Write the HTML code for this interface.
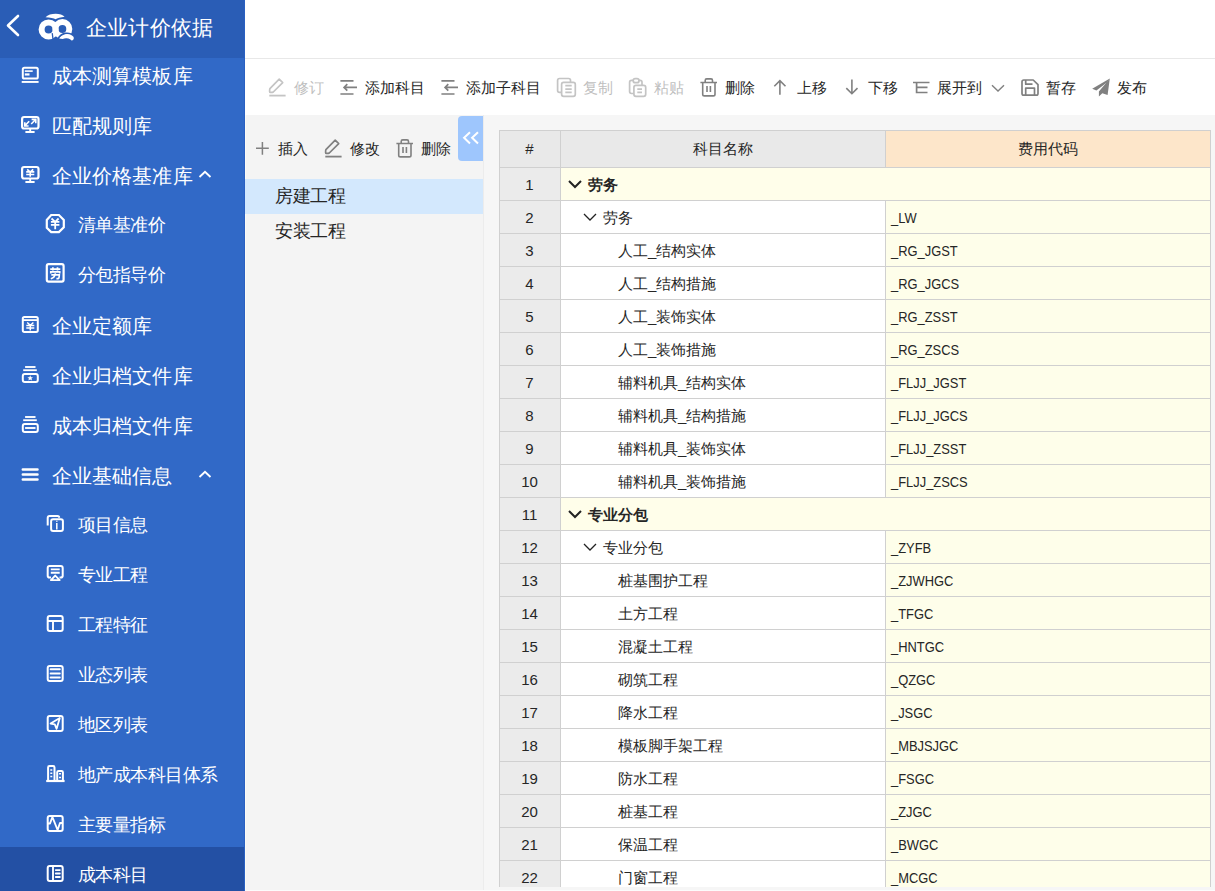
<!DOCTYPE html><html><head><meta charset="utf-8"><style>
*{box-sizing:border-box;margin:0;padding:0}
html,body{width:1215px;height:891px;overflow:hidden;background:#fff;font-family:"Liberation Sans",sans-serif;}
.a{position:absolute;white-space:nowrap;line-height:1}
svg{position:absolute;overflow:visible}
.mi{color:#fff;font-size:20px;letter-spacing:0.1px}
.si{color:#fff;font-size:18px;letter-spacing:-0.55px}
.tt{font-size:15px;color:#262626}
.dis{color:#bfbfbf}
.lt{font-size:18px;color:#262626;letter-spacing:-0.5px}
.cell{position:absolute;font-size:15px;color:#262626;white-space:nowrap;line-height:1}
</style></head><body><div class="a" style="left:0px;top:0px;width:245px;height:891px;background:#3169c7;"></div>
<div class="a" style="left:0px;top:0px;width:245px;height:58px;background:#2a5db6;"></div>
<div class="a" style="left:0px;top:847px;width:245px;height:44px;background:#2350a4;"></div>
<div class="a" style="left:244px;top:0px;width:1px;height:891px;background:#2a60c2;"></div>
<svg style="left:5px;top:14px" width="16" height="24" viewBox="0 0 16 24"><path d="M13 2 L3 11.5 L13 21" fill="none" stroke="#fff" stroke-width="2.6" stroke-linecap="round" stroke-linejoin="round"/></svg>
<svg style="left:36px;top:10px" width="42" height="34" viewBox="0 0 42 34">
<circle cx="12.6" cy="19.4" r="7" fill="none" stroke="#fff" stroke-width="6"/>
<circle cx="26.4" cy="19" r="6.9" fill="none" stroke="#fff" stroke-width="6"/>
<path d="M16.2 23.2 L17 29" stroke="#2a5db6" stroke-width="1.3"/>
<path d="M22 28.8 C25 23 33 21 37.6 26.3" fill="none" stroke="#2a5db6" stroke-width="1.6"/>
<path d="M23.3 28.6 C26.5 24 33.5 22.5 37.2 26.5 C38.5 28.2 37.5 30.8 35.6 30.4 C32.5 27.6 28.5 27.6 23.3 28.6Z" fill="#fff"/>
<path d="M9.5 7.2 C13.5 3 25 2.6 28.6 6.8 C25 7.3 21 8 19.5 9.3 C18 8 14 7.4 9.5 7.2Z" fill="#fff"/>
</svg>
<div class="a " style="left:86px;top:17px;color:#fff;font-size:21px;letter-spacing:0.2px">企业计价依据</div>
<svg style="left:16px;top:62px" width="28" height="28" viewBox="0 0 28 28"><rect x="6.8" y="5.7" width="15" height="10.9" rx="1.6" stroke="#fff" stroke-width="2" fill="none"/><path d="M8.8 9.1 H16.7" stroke="#fff" fill="none" stroke-width="1.6"/><path d="M8.8 12.45 H13.5" stroke="#fff" fill="none" stroke-width="2.2"/><path d="M5.7 19.95 H22.6" stroke="#fff" fill="none" stroke-width="1.9"/></svg>
<div class="a mi" style="left:52px;top:66px;">成本测算模板库</div>
<svg style="left:16px;top:111px" width="28" height="28" viewBox="0 0 28 28"><rect x="6.1" y="6" width="16.4" height="11.5" rx="2" stroke="#fff" fill="none" stroke-width="2.2"/><path d="M14.2 17.8 V21 M9.4 21 H18.6" stroke="#fff" fill="none" stroke-width="1.9"/><path d="M13.2 10.2 L9.2 14.4 M8.8 11.2 V15 H12.6 M15.2 13 L19.4 8.8 M15.6 8.4 H19.8 V12.2" stroke="#fff" fill="none" stroke-width="1.6"/></svg>
<div class="a mi" style="left:52px;top:116px;">匹配规则库</div>
<svg style="left:16px;top:161px" width="28" height="28" viewBox="0 0 28 28"><rect x="6.1" y="6" width="16.4" height="11.5" rx="2" stroke="#fff" fill="none" stroke-width="2.2"/><path d="M14.2 17.8 V21 M9.4 21 H18.6" stroke="#fff" fill="none" stroke-width="1.9"/><path d="M11.2 8.3 L14.2 11.2 L17.2 8.3 M14.2 11 V15.8 M10.2 10.9 H18.3 M10.2 13.5 H18.3" stroke="#fff" fill="none" stroke-width="1.6"/></svg>
<div class="a mi" style="left:52px;top:166px;">企业价格基准库</div>
<svg style="left:40px;top:210px" width="30" height="30" viewBox="0 0 30 30"><path d="M11.2 5 H18.9 L23.8 9.9 V17.2 L18.9 22.1 H11.2 L6.8 17.7 V9.9Z" stroke="#fff" fill="none" stroke-width="2.2"/><path d="M11.5 8.5 L15.2 11.8 L18.6 8.5 M15.2 11.6 V19.3 M10.9 11.8 H19.4 M10.9 14.8 H19.4" stroke="#fff" fill="none" stroke-width="1.8"/></svg>
<div class="a si" style="left:78px;top:216px;">清单基准价</div>
<svg style="left:40px;top:259px" width="30" height="30" viewBox="0 0 30 30"><rect x="6.8" y="5.1" width="16.8" height="17.5" rx="1.8" stroke="#fff" fill="none" stroke-width="2.2"/><path d="M10.2 10.2 H20.3 M12.9 8.2 V11.6 M17.5 8.2 V11.6 M10.8 14.6 V12.9 H19.7 V14.6 M11.3 15.9 H19.3 Q19.2 19.6 18 19.6 H16.4 M15.3 14.2 Q15.2 18.2 10.8 19.8" stroke="#fff" stroke-width="1.7" fill="none"/></svg>
<div class="a si" style="left:78px;top:266px;">分包指导价</div>
<svg style="left:16px;top:311px" width="28" height="28" viewBox="0 0 28 28"><rect x="6.8" y="5.9" width="15" height="15" rx="1.6" stroke="#fff" stroke-width="2" fill="none"/><path d="M6.8 9.1 H21.8" stroke="#fff" fill="none" stroke-width="1.8"/><path d="M11.2 11.5 L14.3 14.3 L17.4 11.5 M14.3 14 V19.5 M10.3 14.6 H18.3 M10.3 17 H18.3" stroke="#fff" fill="none" stroke-width="1.5"/></svg>
<div class="a mi" style="left:52px;top:316px;">企业定额库</div>
<svg style="left:16px;top:361px" width="28" height="28" viewBox="0 0 28 28"><path d="M9.1 6 H19.5" stroke="#fff" fill="none" stroke-width="1.9"/><path d="M7.2 9.2 H20.8" stroke="#fff" fill="none" stroke-width="1.8"/><rect x="6.8" y="13" width="15" height="7.9" rx="2" stroke="#fff" stroke-width="2" fill="none"/><path d="M14.2 14.3 L15 16.2 L17 16.3 L15.5 17.6 L16 19.5 L14.2 18.4 L12.4 19.5 L12.9 17.6 L11.4 16.3 L13.4 16.2Z" fill="#fff"/></svg>
<div class="a mi" style="left:52px;top:366px;">企业归档文件库</div>
<svg style="left:16px;top:411px" width="28" height="28" viewBox="0 0 28 28"><path d="M9.1 6 H19.5" stroke="#fff" fill="none" stroke-width="1.9"/><path d="M7.2 9.2 H20.8" stroke="#fff" fill="none" stroke-width="1.8"/><rect x="6.8" y="13" width="15" height="7.9" rx="2" stroke="#fff" stroke-width="2" fill="none"/><path d="M9.1 17 H19.5" stroke="#fff" fill="none" stroke-width="1.9"/></svg>
<div class="a mi" style="left:52px;top:416px;">成本归档文件库</div>
<svg style="left:16px;top:461px" width="28" height="28" viewBox="0 0 28 28"><path d="M6.8 8.5 H21.5 M6.8 13.5 H21.5 M6.8 18.6 H21.5" stroke="#fff" fill="none" stroke-width="2.5" stroke-linecap="round"/></svg>
<div class="a mi" style="left:52px;top:466px;">企业基础信息</div>
<svg style="left:40px;top:509px" width="30" height="30" viewBox="0 0 30 30"><path d="M7.7 16.5 V9 Q7.7 7.1 9.6 7.1 H17.5 Q19.2 7.1 19.2 8.8" stroke="#fff" fill="none" stroke-width="2"/><rect x="11.1" y="10.3" width="11.8" height="11.6" rx="2" stroke="#fff" stroke-width="2" fill="none"/><path d="M16.8 11.8 V12.8 M16.8 14 V20.5" stroke="#fff" fill="none" stroke-width="1.5"/></svg>
<div class="a si" style="left:78px;top:516px;">项目信息</div>
<svg style="left:40px;top:559px" width="30" height="30" viewBox="0 0 30 30"><path d="M11 18.5 H9.5 Q7.7 18.5 7.7 16.7 V9 Q7.7 7.1 9.6 7.1 H20.8 Q22.7 7.1 22.7 9 V16.7 Q22.7 18.5 20.8 18.5 H19.5" stroke="#fff" stroke-width="2" fill="none"/><path d="M10.8 10.4 H19.7 M10.8 13.8 H19.7" stroke="#fff" fill="none" stroke-width="1.9"/><path d="M15.2 16.6 L10.9 21.1 H19.7Z" stroke="#fff" fill="none" stroke-width="1.9" stroke-linejoin="round"/></svg>
<div class="a si" style="left:78px;top:566px;">专业工程</div>
<svg style="left:40px;top:609px" width="30" height="30" viewBox="0 0 30 30"><rect x="7.7" y="7.1" width="15" height="14.8" rx="2" stroke="#fff" stroke-width="2" fill="none"/><path d="M7.7 12 H22.7 M13 12 V21.9" stroke="#fff" fill="none" stroke-width="1.9"/></svg>
<div class="a si" style="left:78px;top:616px;">工程特征</div>
<svg style="left:40px;top:659px" width="30" height="30" viewBox="0 0 30 30"><rect x="7.7" y="7.1" width="15" height="14.8" rx="2" stroke="#fff" stroke-width="2" fill="none"/><path d="M10.6 10.3 H19.8 M10.6 14.5 H19.8 M10.6 18.5 H19.8" stroke="#fff" fill="none" stroke-width="1.9" stroke-linecap="round"/></svg>
<div class="a si" style="left:78px;top:666px;">业态列表</div>
<svg style="left:40px;top:709px" width="30" height="30" viewBox="0 0 30 30"><rect x="7.7" y="7.1" width="15" height="14.8" rx="2" stroke="#fff" stroke-width="2" fill="none"/><path d="M19.8 9 L10.6 14.6 L14.8 15.4 L16.6 19.8Z" stroke="#fff" fill="none" stroke-width="1.8" stroke-linejoin="round"/></svg>
<div class="a si" style="left:78px;top:716px;">地区列表</div>
<svg style="left:40px;top:759px" width="30" height="30" viewBox="0 0 30 30"><path d="M8.1 21.5 V8.5 Q8.1 7.1 9.5 7.1 H13.1 Q14.5 7.1 14.5 8.5 V21.5 M17.2 21.5 V13.3 Q17.2 11.9 18.6 11.9 H21.5 Q22.9 11.9 22.9 13.3 V21.5" stroke="#fff" stroke-width="2" fill="none"/><path d="M6.2 22 H24.6" stroke="#fff" fill="none" stroke-width="2.2"/><path d="M10.3 10.9 H12.3 M10.3 14.3 H12.3 M10.3 17.6 H12.3 M19 14.7 H21 M19 18.5 H21" stroke="#fff" fill="none" stroke-width="1.5"/></svg>
<div class="a si" style="left:78px;top:766px;">地产成本科目体系</div>
<svg style="left:40px;top:809px" width="30" height="30" viewBox="0 0 30 30"><rect x="7.7" y="7.1" width="15" height="14.8" rx="2" stroke="#fff" stroke-width="2" fill="none"/><path d="M7.7 14.5 H10 L12.4 8 L17.6 21 L20 14 H22.7" stroke="#fff" fill="none" stroke-width="1.9" stroke-linejoin="round"/></svg>
<div class="a si" style="left:78px;top:816px;">主要量指标</div>
<svg style="left:40px;top:859px" width="30" height="30" viewBox="0 0 30 30"><rect x="7.7" y="7.1" width="15" height="14.8" rx="2" stroke="#fff" stroke-width="2" fill="none"/><path d="M13 7.1 V21.9" stroke="#fff" fill="none" stroke-width="1.9"/><path d="M15.8 11.1 H19.8 M15.8 14.5 H19.8 M15.8 18 H19.8" stroke="#fff" fill="none" stroke-width="1.9" stroke-linecap="round"/></svg>
<div class="a si" style="left:78px;top:866px;">成本科目</div>
<svg style="left:197px;top:169px" width="16" height="10" viewBox="0 0 16 10"><path d="M2.5 8 L8 2.8 L13.5 8" fill="none" stroke="#fff" stroke-width="1.9"/></svg>
<svg style="left:197px;top:469px" width="16" height="10" viewBox="0 0 16 10"><path d="M2.5 8 L8 2.8 L13.5 8" fill="none" stroke="#fff" stroke-width="1.9"/></svg>
<div class="a" style="left:245px;top:58px;width:970px;height:1px;background:#e8e8e8;"></div>
<svg style="left:264px;top:74px" width="26" height="26" viewBox="0 0 26 26"><path d="M5.9 14.6 L15.2 5.2 L18.7 8.6 L9.3 18 Q8.7 18.4 6.5 18.4 Q5.6 18.4 5.6 17.4 Q5.6 15.2 5.9 14.6Z" stroke="#c4c4c4" stroke-width="1.7" fill="none" stroke-linejoin="round"/><path d="M5.3 21.6 H21.6" stroke="#c4c4c4" stroke-width="1.8"/></svg>
<div class="a tt dis" style="left:294px;top:80px;">修订</div>
<svg style="left:336px;top:74px" width="26" height="26" viewBox="0 0 26 26"><path d="M4.4 6.8 H17.5 M4.4 20 H17.5 M8.2 13.4 H21 M11.3 10.2 L8.1 13.4 L11.3 16.6" stroke="#808080" stroke-width="1.7" fill="none"/></svg>
<div class="a tt" style="left:365px;top:80px;">添加科目</div>
<svg style="left:437px;top:74px" width="26" height="26" viewBox="0 0 26 26"><path d="M4.4 6.8 H17.5 M4.4 20 H17.5 M8.2 13.4 H21 M11.3 10.2 L8.1 13.4 L11.3 16.6" stroke="#808080" stroke-width="1.7" fill="none"/></svg>
<div class="a tt" style="left:466px;top:80px;">添加子科目</div>
<svg style="left:553px;top:74px" width="26" height="26" viewBox="0 0 26 26"><path d="M8.6 18.4 H6.5 Q4.6 18.4 4.6 16.5 V6.4 Q4.6 4.5 6.5 4.5 H15.6 Q17.5 4.5 17.5 6.4 V8.4" stroke="#c4c4c4" stroke-width="1.7" fill="none"/><rect x="8.6" y="8.4" width="13.7" height="13.9" rx="2" stroke="#c4c4c4" stroke-width="1.7" fill="none"/><path d="M12.3 11.7 H18.7 M12.3 15.1 H18.7 M12.3 18.4 H18.7" stroke="#c4c4c4" stroke-width="1.7" fill="none"/></svg>
<div class="a tt dis" style="left:583px;top:80px;">复制</div>
<svg style="left:624px;top:74px" width="26" height="26" viewBox="0 0 26 26"><path d="M9.3 6.4 H7.5 Q5.6 6.4 5.6 8.3 V17.6 Q5.6 19.5 7.5 19.5 H9.8 M18 11.4 V8.3 Q18 6.4 16.1 6.4 H14.8" stroke="#c4c4c4" stroke-width="1.7" fill="none"/><rect x="9.2" y="4.6" width="5.8" height="4.1" rx="2" stroke="#c4c4c4" stroke-width="1.7" fill="none"/><rect x="9.9" y="11.4" width="11.8" height="10.9" rx="2" stroke="#c4c4c4" stroke-width="1.7" fill="none"/><path d="M13.3 15.2 H18 M13.3 18.4 H18" stroke="#c4c4c4" stroke-width="1.7" fill="none"/></svg>
<div class="a tt dis" style="left:654px;top:80px;">粘贴</div>
<svg style="left:696px;top:74px" width="26" height="26" viewBox="0 0 26 26"><path d="M9.2 8.4 V6.4 Q9.2 4.9 10.7 4.9 H15 Q16.5 4.9 16.5 6.4 V8.4 M4.4 8.5 H21 M6.7 8.5 V20.2 Q6.7 21.9 8.4 21.9 H17.3 Q19 21.9 19 20.2 V8.5 M11 12 V18 M14.4 12 V18" stroke="#808080" stroke-width="1.6" fill="none"/></svg>
<div class="a tt" style="left:725px;top:80px;">删除</div>
<svg style="left:768px;top:74px" width="26" height="26" viewBox="0 0 26 26"><path d="M11.9 6.6 V20.8 M6.3 12.2 L11.9 6.6 L17.5 12.2" stroke="#808080" stroke-width="1.6" fill="none"/></svg>
<div class="a tt" style="left:797px;top:80px;">上移</div>
<svg style="left:840px;top:74px" width="26" height="26" viewBox="0 0 26 26"><path d="M11.9 5.5 V19.7 M6.3 14.1 L11.9 19.7 L17.5 14.1" stroke="#808080" stroke-width="1.6" fill="none"/></svg>
<div class="a tt" style="left:868px;top:80px;">下移</div>
<svg style="left:908px;top:74px" width="26" height="26" viewBox="0 0 26 26"><path d="M5 8.5 H21.5 M8.6 8.5 V18.5 H19.5 M8.6 13.4 H19.5" stroke="#808080" stroke-width="1.7" fill="none"/></svg>
<div class="a tt" style="left:937px;top:80px;">展开到</div>
<svg style="left:1017px;top:74px" width="26" height="26" viewBox="0 0 26 26"><path d="M6.8 6 H16.2 L21 10.6 V19.5 Q21 21.2 19.3 21.2 H6.8 Q5 21.2 5 19.5 V7.8 Q5 6 6.8 6Z M8.7 6 V10.2 H15.5 M8.7 21.2 V14.1 H17.5 V21.2" stroke="#808080" stroke-width="1.7" fill="none" stroke-linejoin="round"/></svg>
<div class="a tt" style="left:1046px;top:80px;">暂存</div>
<svg style="left:1088px;top:74px" width="26" height="26" viewBox="0 0 26 26"><path d="M21.8 4.5 L4.2 14.8 L8.4 16.6 L19.2 8.2Z" fill="#808080"/><path d="M21.8 4.5 L10.9 17.6 L10.9 22.6 L14.3 19.2 L19.6 20.9Z" fill="#808080"/></svg>
<div class="a tt" style="left:1117px;top:80px;">发布</div>
<svg style="left:990px;top:83px" width="16" height="10" viewBox="0 0 16 10"><path d="M2 2.2 L8 8 L14 2.2" fill="none" stroke="#808080" stroke-width="1.4"/></svg>
<div class="a" style="left:245px;top:115px;width:970px;height:776px;background:#f6f6f6;"></div>
<div class="a" style="left:245px;top:115px;width:238px;height:776px;background:#f4f4f4;"></div>
<div class="a" style="left:245px;top:115px;width:1px;height:776px;background:#fbfbf6;"></div>
<div class="a" style="left:483px;top:115px;width:1px;height:776px;background:#ececec;"></div>
<div class="a" style="left:245px;top:179px;width:238px;height:35px;background:#d3e8fd;"></div>
<div class="a" style="left:458px;top:116px;width:25px;height:45px;background:#9ec6fd;border-radius:4px 0 0 4px"></div>
<svg style="left:456px;top:114px" width="30" height="50" viewBox="0 0 30 50"><path d="M14 18.2 L8.1 23.8 L14 29.4 M22 18.2 L16.1 23.8 L22 29.4" fill="none" stroke="#fff" stroke-width="2"/></svg>
<svg style="left:250px;top:134px" width="26" height="26" viewBox="0 0 26 26"><path d="M12.4 7.9 V20.8 M6 14.3 H18.8" stroke="#808080" stroke-width="1.5" fill="none"/></svg>
<div class="a tt" style="left:278px;top:141px;">插入</div>
<svg style="left:320px;top:135px" width="26" height="26" viewBox="0 0 26 26"><path d="M5.9 14.6 L15.2 5.2 L18.7 8.6 L9.3 18 Q8.7 18.4 6.5 18.4 Q5.6 18.4 5.6 17.4 Q5.6 15.2 5.9 14.6Z" stroke="#808080" stroke-width="1.7" fill="none" stroke-linejoin="round"/><path d="M5.3 21.6 H21.6" stroke="#808080" stroke-width="1.8"/></svg>
<div class="a tt" style="left:350px;top:141px;">修改</div>
<svg style="left:392px;top:135px" width="26" height="26" viewBox="0 0 26 26"><path d="M9.2 8.4 V6.4 Q9.2 4.9 10.7 4.9 H15 Q16.5 4.9 16.5 6.4 V8.4 M4.4 8.5 H21 M6.7 8.5 V20.2 Q6.7 21.9 8.4 21.9 H17.3 Q19 21.9 19 20.2 V8.5 M11 12 V18 M14.4 12 V18" stroke="#808080" stroke-width="1.6" fill="none"/></svg>
<div class="a tt" style="left:421px;top:141px;">删除</div>
<div class="a lt" style="left:275px;top:187px;">房建工程</div>
<div class="a lt" style="left:275px;top:222px;">安装工程</div>
<div class="a" style="left:499px;top:130px;width:712px;height:757px;overflow:hidden;background:#fff">
<div class="a" style="left:0px;top:0px;width:61px;height:37px;background:#e9e9e9;"></div>
<div class="a" style="left:61px;top:0px;width:325px;height:37px;background:#e9e9e9;"></div>
<div class="a" style="left:386px;top:0px;width:326px;height:37px;background:#fde6ca;"></div>
<div class="cell" style="left:0px;top:11px;width:61px;text-align:center">#</div>
<div class="cell" style="left:61px;top:11px;width:325px;text-align:center">科目名称</div>
<div class="cell" style="left:386px;top:11px;width:325px;text-align:center">费用代码</div>
<div class="a" style="left:0px;top:37px;width:61px;height:33px;background:#ebebeb;"></div>
<div class="a" style="left:61px;top:37px;width:650px;height:33px;background:#fffeea;"></div>
<div class="cell" style="left:0px;top:47px;width:61px;text-align:center">1</div>
<svg style="left:69px;top:50px" width="14" height="8"><path d="M1 1 L7 7 L13 1" fill="none" stroke="#222" stroke-width="2"/></svg>
<div class="cell" style="left:89px;top:47px;font-weight:bold">劳务</div>
<div class="a" style="left:0px;top:70px;width:61px;height:33px;background:#ebebeb;"></div>
<div class="a" style="left:61px;top:70px;width:325px;height:33px;background:#fff;"></div>
<div class="a" style="left:386px;top:70px;width:325px;height:33px;background:#fefeea;"></div>
<div class="cell" style="left:0px;top:80px;width:61px;text-align:center">2</div>
<svg style="left:84px;top:83px" width="14" height="8"><path d="M1 1 L7 7 L13 1" fill="none" stroke="#222" stroke-width="1.3"/></svg>
<div class="cell" style="left:104px;top:80px;">劳务</div>
<div class="cell" style="left:392px;top:80px;transform:scaleX(0.86);transform-origin:0 0">_LW</div>
<div class="a" style="left:0px;top:103px;width:61px;height:33px;background:#ebebeb;"></div>
<div class="a" style="left:61px;top:103px;width:325px;height:33px;background:#fff;"></div>
<div class="a" style="left:386px;top:103px;width:325px;height:33px;background:#fefeea;"></div>
<div class="cell" style="left:0px;top:113px;width:61px;text-align:center">3</div>
<div class="cell" style="left:119px;top:113px;">人工_结构实体</div>
<div class="cell" style="left:392px;top:113px;transform:scaleX(0.86);transform-origin:0 0">_RG_JGST</div>
<div class="a" style="left:0px;top:136px;width:61px;height:33px;background:#ebebeb;"></div>
<div class="a" style="left:61px;top:136px;width:325px;height:33px;background:#fff;"></div>
<div class="a" style="left:386px;top:136px;width:325px;height:33px;background:#fefeea;"></div>
<div class="cell" style="left:0px;top:146px;width:61px;text-align:center">4</div>
<div class="cell" style="left:119px;top:146px;">人工_结构措施</div>
<div class="cell" style="left:392px;top:146px;transform:scaleX(0.86);transform-origin:0 0">_RG_JGCS</div>
<div class="a" style="left:0px;top:169px;width:61px;height:33px;background:#ebebeb;"></div>
<div class="a" style="left:61px;top:169px;width:325px;height:33px;background:#fff;"></div>
<div class="a" style="left:386px;top:169px;width:325px;height:33px;background:#fefeea;"></div>
<div class="cell" style="left:0px;top:179px;width:61px;text-align:center">5</div>
<div class="cell" style="left:119px;top:179px;">人工_装饰实体</div>
<div class="cell" style="left:392px;top:179px;transform:scaleX(0.86);transform-origin:0 0">_RG_ZSST</div>
<div class="a" style="left:0px;top:202px;width:61px;height:33px;background:#ebebeb;"></div>
<div class="a" style="left:61px;top:202px;width:325px;height:33px;background:#fff;"></div>
<div class="a" style="left:386px;top:202px;width:325px;height:33px;background:#fefeea;"></div>
<div class="cell" style="left:0px;top:212px;width:61px;text-align:center">6</div>
<div class="cell" style="left:119px;top:212px;">人工_装饰措施</div>
<div class="cell" style="left:392px;top:212px;transform:scaleX(0.86);transform-origin:0 0">_RG_ZSCS</div>
<div class="a" style="left:0px;top:235px;width:61px;height:33px;background:#ebebeb;"></div>
<div class="a" style="left:61px;top:235px;width:325px;height:33px;background:#fff;"></div>
<div class="a" style="left:386px;top:235px;width:325px;height:33px;background:#fefeea;"></div>
<div class="cell" style="left:0px;top:245px;width:61px;text-align:center">7</div>
<div class="cell" style="left:119px;top:245px;">辅料机具_结构实体</div>
<div class="cell" style="left:392px;top:245px;transform:scaleX(0.86);transform-origin:0 0">_FLJJ_JGST</div>
<div class="a" style="left:0px;top:268px;width:61px;height:33px;background:#ebebeb;"></div>
<div class="a" style="left:61px;top:268px;width:325px;height:33px;background:#fff;"></div>
<div class="a" style="left:386px;top:268px;width:325px;height:33px;background:#fefeea;"></div>
<div class="cell" style="left:0px;top:278px;width:61px;text-align:center">8</div>
<div class="cell" style="left:119px;top:278px;">辅料机具_结构措施</div>
<div class="cell" style="left:392px;top:278px;transform:scaleX(0.86);transform-origin:0 0">_FLJJ_JGCS</div>
<div class="a" style="left:0px;top:301px;width:61px;height:33px;background:#ebebeb;"></div>
<div class="a" style="left:61px;top:301px;width:325px;height:33px;background:#fff;"></div>
<div class="a" style="left:386px;top:301px;width:325px;height:33px;background:#fefeea;"></div>
<div class="cell" style="left:0px;top:311px;width:61px;text-align:center">9</div>
<div class="cell" style="left:119px;top:311px;">辅料机具_装饰实体</div>
<div class="cell" style="left:392px;top:311px;transform:scaleX(0.86);transform-origin:0 0">_FLJJ_ZSST</div>
<div class="a" style="left:0px;top:334px;width:61px;height:33px;background:#ebebeb;"></div>
<div class="a" style="left:61px;top:334px;width:325px;height:33px;background:#fff;"></div>
<div class="a" style="left:386px;top:334px;width:325px;height:33px;background:#fefeea;"></div>
<div class="cell" style="left:0px;top:344px;width:61px;text-align:center">10</div>
<div class="cell" style="left:119px;top:344px;">辅料机具_装饰措施</div>
<div class="cell" style="left:392px;top:344px;transform:scaleX(0.86);transform-origin:0 0">_FLJJ_ZSCS</div>
<div class="a" style="left:0px;top:367px;width:61px;height:33px;background:#ebebeb;"></div>
<div class="a" style="left:61px;top:367px;width:650px;height:33px;background:#fffeea;"></div>
<div class="cell" style="left:0px;top:377px;width:61px;text-align:center">11</div>
<svg style="left:69px;top:380px" width="14" height="8"><path d="M1 1 L7 7 L13 1" fill="none" stroke="#222" stroke-width="2"/></svg>
<div class="cell" style="left:89px;top:377px;font-weight:bold">专业分包</div>
<div class="a" style="left:0px;top:400px;width:61px;height:33px;background:#ebebeb;"></div>
<div class="a" style="left:61px;top:400px;width:325px;height:33px;background:#fff;"></div>
<div class="a" style="left:386px;top:400px;width:325px;height:33px;background:#fefeea;"></div>
<div class="cell" style="left:0px;top:410px;width:61px;text-align:center">12</div>
<svg style="left:84px;top:413px" width="14" height="8"><path d="M1 1 L7 7 L13 1" fill="none" stroke="#222" stroke-width="1.3"/></svg>
<div class="cell" style="left:104px;top:410px;">专业分包</div>
<div class="cell" style="left:392px;top:410px;transform:scaleX(0.86);transform-origin:0 0">_ZYFB</div>
<div class="a" style="left:0px;top:433px;width:61px;height:33px;background:#ebebeb;"></div>
<div class="a" style="left:61px;top:433px;width:325px;height:33px;background:#fff;"></div>
<div class="a" style="left:386px;top:433px;width:325px;height:33px;background:#fefeea;"></div>
<div class="cell" style="left:0px;top:443px;width:61px;text-align:center">13</div>
<div class="cell" style="left:119px;top:443px;">桩基围护工程</div>
<div class="cell" style="left:392px;top:443px;transform:scaleX(0.86);transform-origin:0 0">_ZJWHGC</div>
<div class="a" style="left:0px;top:466px;width:61px;height:33px;background:#ebebeb;"></div>
<div class="a" style="left:61px;top:466px;width:325px;height:33px;background:#fff;"></div>
<div class="a" style="left:386px;top:466px;width:325px;height:33px;background:#fefeea;"></div>
<div class="cell" style="left:0px;top:476px;width:61px;text-align:center">14</div>
<div class="cell" style="left:119px;top:476px;">土方工程</div>
<div class="cell" style="left:392px;top:476px;transform:scaleX(0.86);transform-origin:0 0">_TFGC</div>
<div class="a" style="left:0px;top:499px;width:61px;height:33px;background:#ebebeb;"></div>
<div class="a" style="left:61px;top:499px;width:325px;height:33px;background:#fff;"></div>
<div class="a" style="left:386px;top:499px;width:325px;height:33px;background:#fefeea;"></div>
<div class="cell" style="left:0px;top:509px;width:61px;text-align:center">15</div>
<div class="cell" style="left:119px;top:509px;">混凝土工程</div>
<div class="cell" style="left:392px;top:509px;transform:scaleX(0.86);transform-origin:0 0">_HNTGC</div>
<div class="a" style="left:0px;top:532px;width:61px;height:33px;background:#ebebeb;"></div>
<div class="a" style="left:61px;top:532px;width:325px;height:33px;background:#fff;"></div>
<div class="a" style="left:386px;top:532px;width:325px;height:33px;background:#fefeea;"></div>
<div class="cell" style="left:0px;top:542px;width:61px;text-align:center">16</div>
<div class="cell" style="left:119px;top:542px;">砌筑工程</div>
<div class="cell" style="left:392px;top:542px;transform:scaleX(0.86);transform-origin:0 0">_QZGC</div>
<div class="a" style="left:0px;top:565px;width:61px;height:33px;background:#ebebeb;"></div>
<div class="a" style="left:61px;top:565px;width:325px;height:33px;background:#fff;"></div>
<div class="a" style="left:386px;top:565px;width:325px;height:33px;background:#fefeea;"></div>
<div class="cell" style="left:0px;top:575px;width:61px;text-align:center">17</div>
<div class="cell" style="left:119px;top:575px;">降水工程</div>
<div class="cell" style="left:392px;top:575px;transform:scaleX(0.86);transform-origin:0 0">_JSGC</div>
<div class="a" style="left:0px;top:598px;width:61px;height:33px;background:#ebebeb;"></div>
<div class="a" style="left:61px;top:598px;width:325px;height:33px;background:#fff;"></div>
<div class="a" style="left:386px;top:598px;width:325px;height:33px;background:#fefeea;"></div>
<div class="cell" style="left:0px;top:608px;width:61px;text-align:center">18</div>
<div class="cell" style="left:119px;top:608px;">模板脚手架工程</div>
<div class="cell" style="left:392px;top:608px;transform:scaleX(0.86);transform-origin:0 0">_MBJSJGC</div>
<div class="a" style="left:0px;top:631px;width:61px;height:33px;background:#ebebeb;"></div>
<div class="a" style="left:61px;top:631px;width:325px;height:33px;background:#fff;"></div>
<div class="a" style="left:386px;top:631px;width:325px;height:33px;background:#fefeea;"></div>
<div class="cell" style="left:0px;top:641px;width:61px;text-align:center">19</div>
<div class="cell" style="left:119px;top:641px;">防水工程</div>
<div class="cell" style="left:392px;top:641px;transform:scaleX(0.86);transform-origin:0 0">_FSGC</div>
<div class="a" style="left:0px;top:664px;width:61px;height:33px;background:#ebebeb;"></div>
<div class="a" style="left:61px;top:664px;width:325px;height:33px;background:#fff;"></div>
<div class="a" style="left:386px;top:664px;width:325px;height:33px;background:#fefeea;"></div>
<div class="cell" style="left:0px;top:674px;width:61px;text-align:center">20</div>
<div class="cell" style="left:119px;top:674px;">桩基工程</div>
<div class="cell" style="left:392px;top:674px;transform:scaleX(0.86);transform-origin:0 0">_ZJGC</div>
<div class="a" style="left:0px;top:697px;width:61px;height:33px;background:#ebebeb;"></div>
<div class="a" style="left:61px;top:697px;width:325px;height:33px;background:#fff;"></div>
<div class="a" style="left:386px;top:697px;width:325px;height:33px;background:#fefeea;"></div>
<div class="cell" style="left:0px;top:707px;width:61px;text-align:center">21</div>
<div class="cell" style="left:119px;top:707px;">保温工程</div>
<div class="cell" style="left:392px;top:707px;transform:scaleX(0.86);transform-origin:0 0">_BWGC</div>
<div class="a" style="left:0px;top:730px;width:61px;height:33px;background:#ebebeb;"></div>
<div class="a" style="left:61px;top:730px;width:325px;height:33px;background:#fff;"></div>
<div class="a" style="left:386px;top:730px;width:325px;height:33px;background:#fefeea;"></div>
<div class="cell" style="left:0px;top:740px;width:61px;text-align:center">22</div>
<div class="cell" style="left:119px;top:740px;">门窗工程</div>
<div class="cell" style="left:392px;top:740px;transform:scaleX(0.86);transform-origin:0 0">_MCGC</div>
<div class="a" style="left:0px;top:37px;width:712px;height:1px;background:#d0d0d0;"></div>
<div class="a" style="left:0px;top:70px;width:712px;height:1px;background:#d0d0d0;"></div>
<div class="a" style="left:0px;top:103px;width:712px;height:1px;background:#d0d0d0;"></div>
<div class="a" style="left:0px;top:136px;width:712px;height:1px;background:#d0d0d0;"></div>
<div class="a" style="left:0px;top:169px;width:712px;height:1px;background:#d0d0d0;"></div>
<div class="a" style="left:0px;top:202px;width:712px;height:1px;background:#d0d0d0;"></div>
<div class="a" style="left:0px;top:235px;width:712px;height:1px;background:#d0d0d0;"></div>
<div class="a" style="left:0px;top:268px;width:712px;height:1px;background:#d0d0d0;"></div>
<div class="a" style="left:0px;top:301px;width:712px;height:1px;background:#d0d0d0;"></div>
<div class="a" style="left:0px;top:334px;width:712px;height:1px;background:#d0d0d0;"></div>
<div class="a" style="left:0px;top:367px;width:712px;height:1px;background:#d0d0d0;"></div>
<div class="a" style="left:0px;top:400px;width:712px;height:1px;background:#d0d0d0;"></div>
<div class="a" style="left:0px;top:433px;width:712px;height:1px;background:#d0d0d0;"></div>
<div class="a" style="left:0px;top:466px;width:712px;height:1px;background:#d0d0d0;"></div>
<div class="a" style="left:0px;top:499px;width:712px;height:1px;background:#d0d0d0;"></div>
<div class="a" style="left:0px;top:532px;width:712px;height:1px;background:#d0d0d0;"></div>
<div class="a" style="left:0px;top:565px;width:712px;height:1px;background:#d0d0d0;"></div>
<div class="a" style="left:0px;top:598px;width:712px;height:1px;background:#d0d0d0;"></div>
<div class="a" style="left:0px;top:631px;width:712px;height:1px;background:#d0d0d0;"></div>
<div class="a" style="left:0px;top:664px;width:712px;height:1px;background:#d0d0d0;"></div>
<div class="a" style="left:0px;top:697px;width:712px;height:1px;background:#d0d0d0;"></div>
<div class="a" style="left:0px;top:730px;width:712px;height:1px;background:#d0d0d0;"></div>
<div class="a" style="left:0px;top:763px;width:712px;height:1px;background:#d0d0d0;"></div>
<div class="a" style="left:0px;top:0px;width:712px;height:1px;background:#d0d0d0;"></div>
<div class="a" style="left:0px;top:0px;width:1px;height:757px;background:#d0d0d0;"></div>
<div class="a" style="left:61px;top:0px;width:1px;height:757px;background:#d0d0d0;"></div>
<div class="a" style="left:711px;top:0px;width:1px;height:757px;background:#d0d0d0;"></div>
<div class="a" style="left:386px;top:0px;width:1px;height:37px;background:#d0d0d0;"></div>
<div class="a" style="left:386px;top:70px;width:1px;height:33px;background:#d0d0d0;"></div>
<div class="a" style="left:386px;top:103px;width:1px;height:33px;background:#d0d0d0;"></div>
<div class="a" style="left:386px;top:136px;width:1px;height:33px;background:#d0d0d0;"></div>
<div class="a" style="left:386px;top:169px;width:1px;height:33px;background:#d0d0d0;"></div>
<div class="a" style="left:386px;top:202px;width:1px;height:33px;background:#d0d0d0;"></div>
<div class="a" style="left:386px;top:235px;width:1px;height:33px;background:#d0d0d0;"></div>
<div class="a" style="left:386px;top:268px;width:1px;height:33px;background:#d0d0d0;"></div>
<div class="a" style="left:386px;top:301px;width:1px;height:33px;background:#d0d0d0;"></div>
<div class="a" style="left:386px;top:334px;width:1px;height:33px;background:#d0d0d0;"></div>
<div class="a" style="left:386px;top:400px;width:1px;height:33px;background:#d0d0d0;"></div>
<div class="a" style="left:386px;top:433px;width:1px;height:33px;background:#d0d0d0;"></div>
<div class="a" style="left:386px;top:466px;width:1px;height:33px;background:#d0d0d0;"></div>
<div class="a" style="left:386px;top:499px;width:1px;height:33px;background:#d0d0d0;"></div>
<div class="a" style="left:386px;top:532px;width:1px;height:33px;background:#d0d0d0;"></div>
<div class="a" style="left:386px;top:565px;width:1px;height:33px;background:#d0d0d0;"></div>
<div class="a" style="left:386px;top:598px;width:1px;height:33px;background:#d0d0d0;"></div>
<div class="a" style="left:386px;top:631px;width:1px;height:33px;background:#d0d0d0;"></div>
<div class="a" style="left:386px;top:664px;width:1px;height:33px;background:#d0d0d0;"></div>
<div class="a" style="left:386px;top:697px;width:1px;height:33px;background:#d0d0d0;"></div>
<div class="a" style="left:386px;top:730px;width:1px;height:33px;background:#d0d0d0;"></div>
</div>
<div class="a" style="left:245px;top:890px;width:970px;height:1px;background:#fcfcfc;"></div></body></html>
